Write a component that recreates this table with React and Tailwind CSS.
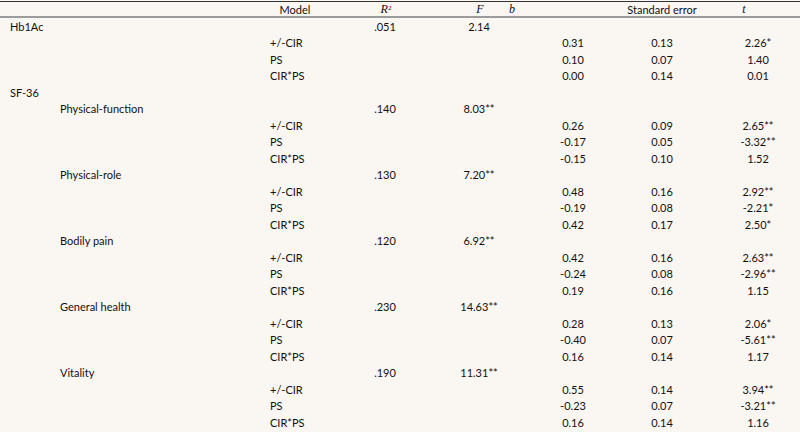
const groups = [
	{
		label: 'Hb1Ac',
		level: 0,
		r2: '.051',
		f: '2.14',
		rows: [
			[ '0.31', '0.13', '2.26*' ],
			[ '0.10', '0.07', '1.40' ],
			[ '0.00', '0.14', '0.01' ],
		],
	},
	{ label: 'SF-36', level: 0 },
	{
		label: 'Physical-function',
		level: 1,
		r2: '.140',
		f: '8.03**',
		rows: [
			[ '0.26', '0.09', '2.65**' ],
			[ '-0.17', '0.05', '-3.32**' ],
			[ '-0.15', '0.10', '1.52' ],
		],
	},
	{
		label: 'Physical-role',
		level: 1,
		r2: '.130',
		f: '7.20**',
		rows: [
			[ '0.48', '0.16', '2.92**' ],
			[ '-0.19', '0.08', '-2.21*' ],
			[ '0.42', '0.17', '2.50*' ],
		],
	},
	{
		label: 'Bodily pain',
		level: 1,
		r2: '.120',
		f: '6.92**',
		rows: [
			[ '0.42', '0.16', '2.63**' ],
			[ '-0.24', '0.08', '-2.96**' ],
			[ '0.19', '0.16', '1.15' ],
		],
	},
	{
		label: 'General health',
		level: 1,
		r2: '.230',
		f: '14.63**',
		rows: [
			[ '0.28', '0.13', '2.06*' ],
			[ '-0.40', '0.07', '-5.61**' ],
			[ '0.16', '0.14', '1.17' ],
		],
	},
	{
		label: 'Vitality',
		level: 1,
		r2: '.190',
		f: '11.31**',
		rows: [
			[ '0.55', '0.14', '3.94**' ],
			[ '-0.23', '0.07', '-3.21**' ],
			[ '0.16', '0.14', '1.16' ],
		],
	},
];

const models = [ '+/-CIR', 'PS', 'CIR*PS' ];

const rowCls =
	'grid grid-cols-[270px_80px_70px_118px_70px_108px_84px] h-[16.5px] items-center leading-none';

const Row = ( { cells } ) => (
	<div className={ rowCls }>
		{ cells.map( ( c, i ) => (
			<div
				key={ i }
				className={
					i === 0
						? c.indent
						: i === 1
						? 'text-left whitespace-nowrap'
						: 'text-center whitespace-nowrap'
				}
			>
				{ i === 0 ? c.text : c }
			</div>
		) ) }
	</div>
);

const App = () => {
	const body = [];
	groups.forEach( ( g, gi ) => {
		body.push(
			<Row
				key={ `g${ gi }` }
				cells={ [
					{ text: g.label, indent: g.level === 0 ? 'pl-[10px]' : 'pl-[60px]' },
					'',
					g.r2 || '',
					g.f || '',
					'',
					'',
					'',
				] }
			/>
		);
		( g.rows || [] ).forEach( ( r, ri ) => {
			body.push(
				<Row
					key={ `g${ gi }r${ ri }` }
					cells={ [ { text: '', indent: '' }, models[ ri ], '', '', r[ 0 ], r[ 1 ], r[ 2 ] ] }
				/>
			);
		} );
	} );

	return (
		<div
			className="w-[800px] h-[432px] overflow-hidden bg-[#faf6f2] text-[#111111] text-[11px] pt-px"
			style={ { fontFamily: 'Lato, "Open Sans", sans-serif' } }
		>
			{ /* header */ }
			<div className="border-t border-[#333333] border-b-2 border-b-[#9c9c9c] h-[17px] flex items-center leading-none">
				<div className="w-[270px]" />
				<div className="w-[50px] text-center">Model</div>
				<div className="w-[132px] text-center italic font-['Liberation_Serif',serif] text-[12px]">
					R<sup className="text-[7px] not-italic">2</sup>
				</div>
				<div className="w-[56px] text-center italic font-['Liberation_Serif',serif] text-[12px]">
					F
				</div>
				<div className="w-[8px] text-center italic font-['Liberation_Serif',serif] text-[12px]">
					b
				</div>
				<div className="w-[124px] ml-[84px] text-center">Standard error</div>
				<div className="w-[40px] text-center italic font-['Liberation_Serif',serif] text-[12px]">
					t
				</div>
			</div>
			{ body }
		</div>
	);
};

export default App;
